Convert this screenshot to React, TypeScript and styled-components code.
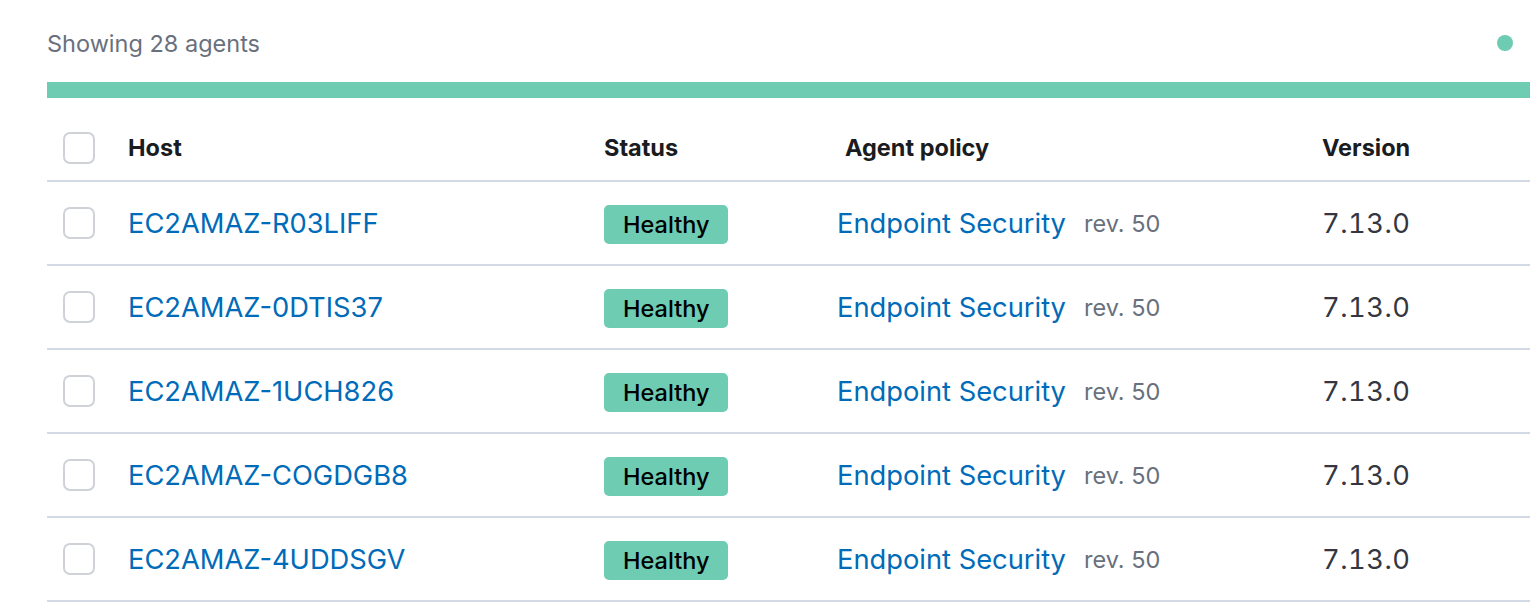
import React from "react";
import styled, { createGlobalStyle } from "styled-components";

const GlobalStyle = createGlobalStyle`
  html, body {
    margin: 0;
    padding: 0;
    background: #ffffff;
    font-family: Inter, "Noto Sans", "Liberation Sans", sans-serif;
    -webkit-font-smoothing: antialiased;
  }
`;

const Page = styled.div`
  padding: 22px 0 0 47px;
  width: 1530px;
  box-sizing: border-box;
  overflow: hidden;
`;

const TopBar = styled.div`
  display: flex;
  align-items: center;
  justify-content: space-between;
  height: 42px;
  padding-right: 17px;
`;

const Count = styled.span`
  font-size: 23.5px;
  color: #69707d;
`;

const Dot = styled.span`
  width: 16px;
  height: 16px;
  border-radius: 50%;
  background: #6dccb1;
`;

const Progress = styled.div`
  height: 16px;
  margin-top: 18px;
  background: #6dccb1;
`;

const Row = styled.div<{ $head?: boolean }>`
  display: grid;
  grid-template-columns: 81px 476px 233px 485px 1fr;
  align-items: center;
  box-sizing: border-box;
  height: 84px;
  padding-top: ${(p) => (p.$head ? "17px" : "0")};
  border-bottom: 2px solid #d3dae6;
`;

const Cell = styled.div<{ $offset?: number }>`
  display: flex;
  align-items: center;
  gap: 18px;
  padding-left: ${(p) => p.$offset ?? 0}px;
  white-space: nowrap;
`;

const Check = styled.span`
  width: 28px;
  height: 28px;
  margin-left: 16px;
  border: 2px solid #cfd2d7;
  border-radius: 7px;
  background: #fff;
`;

const HeadLabel = styled.span`
  font-size: 23.5px;
  font-weight: 700;
  color: #1a1c21;
`;

const Link = styled.a`
  font-size: 27.3px;
  color: #006bb8;
  text-decoration: none;
`;

const Badge = styled.span`
  display: inline-flex;
  align-items: center;
  height: 39px;
  margin-top: 3px;
  padding: 0 19px;
  border-radius: 5px;
  background: #6dccb1;
  color: #000;
  font-size: 23.5px;
  font-weight: 500;
`;

const Rev = styled.span`
  font-size: 23.5px;
  color: #69707d;
`;

const Version = styled.span`
  font-size: 27.3px;
  color: #343741;
  font-variant-numeric: tabular-nums;
  letter-spacing: 0.5px;
`;

const hosts = [
  "EC2AMAZ-R03LIFF",
  "EC2AMAZ-0DTIS37",
  "EC2AMAZ-1UCH826",
  "EC2AMAZ-COGDGB8",
  "EC2AMAZ-4UDDSGV",
];

export default function App() {
  return (
    <>
      <GlobalStyle />
      <Page>
        <TopBar>
          <Count>Showing 28 agents</Count>
          <Dot />
        </TopBar>
        <Progress />
        <Row $head>
          <Cell>
            <Check />
          </Cell>
          <Cell>
            <HeadLabel>Host</HeadLabel>
          </Cell>
          <Cell>
            <HeadLabel>Status</HeadLabel>
          </Cell>
          <Cell $offset={8}>
            <HeadLabel>Agent policy</HeadLabel>
          </Cell>
          <Cell>
            <HeadLabel>Version</HeadLabel>
          </Cell>
        </Row>
        {hosts.map((h) => (
          <Row key={h}>
            <Cell>
              <Check />
            </Cell>
            <Cell>
              <Link href="#">{h}</Link>
            </Cell>
            <Cell>
              <Badge>Healthy</Badge>
            </Cell>
            <Cell>
              <Link href="#">Endpoint Security</Link>
              <Rev>rev. 50</Rev>
            </Cell>
            <Cell>
              <Version>7.13.0</Version>
            </Cell>
          </Row>
        ))}
      </Page>
    </>
  );
}
